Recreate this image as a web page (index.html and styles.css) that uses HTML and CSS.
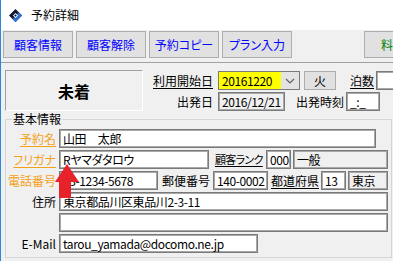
FILE: index.html
```html
<!DOCTYPE html>
<html lang="ja">
<head>
<meta charset="utf-8">
<title>予約詳細</title>
<link rel="stylesheet" href="styles.css">
</head>
<body>
<div class="win">
  <div class="titlebar">
    <svg class="appicon" viewBox="0 0 13 13" width="13" height="13">
      <polygon points="6.5,0 13,6.5 6.5,13 0,6.5" fill="#0d1530"/>
      <polygon points="9.5,3.5 13,6.5 6.5,13 3.5,10" fill="#2f6fd6"/>
      <polygon points="4,6.5 6.5,4 9,6.5 6.5,9" fill="#ffffff"/>
      <polygon points="5.2,6.5 6.5,5.2 7.8,6.5 6.5,7.8" fill="#0d1530"/>
    </svg>
    <span class="title">予約詳細</span>
  </div>
  <div class="toolbar">
    <button class="tb">顧客情報</button>
    <button class="tb">顧客解除</button>
    <button class="tb">予約コピー</button>
    <button class="tb">プラン入力</button>
    <button class="tb tb-green">料</button>
  </div>
  <div class="main">
    <div class="top">
      <div class="status">未着</div>
      <div class="dates">
        <div class="drow">
          <span class="dlbl u">利用開始日</span>
          <div class="combo">
            <span class="combo-text">20161220</span>
            <span class="combo-btn"><svg viewBox="0 0 10 6" width="10" height="6"><polyline points="1,1 5,5 9,1" fill="none" stroke="#606060" stroke-width="1.2"/></svg></span>
          </div>
          <button class="daybtn">火</button>
          <span class="lbl u nights-l">泊数</span>
          <span class="box nights"></span>
        </div>
        <div class="drow">
          <span class="dlbl">出発日</span>
          <span class="box dis depdate">2016/12/21</span>
          <span class="lbl deptime-l">出発時刻</span>
          <span class="box deptime">_:_</span>
        </div>
      </div>
    </div>
    <fieldset class="group">
      <legend>基本情報</legend>
      <div class="frow">
        <span class="flbl orange u">予約名</span>
        <span class="box w-name">山田　太郎</span>
      </div>
      <div class="frow">
        <span class="flbl orange u">フリガナ</span>
        <span class="box w-kana">Rヤマダタロウ</span>
        <span class="lbl u rank-l">顧客ランク</span>
        <span class="box w-rank">000</span>
        <span class="box dis w-rankname">一般</span>
      </div>
      <div class="frow">
        <span class="flbl orange">電話番号</span>
        <span class="box w-tel">03-1234-5678</span>
        <span class="lbl zip-l">郵便番号</span>
        <span class="box w-zip">140-0002</span>
        <span class="lbl u pref-l">都道府県</span>
        <span class="box w-pref">13</span>
        <span class="box dis w-prefname">東京</span>
      </div>
      <div class="frow">
        <span class="flbl">住所</span>
        <span class="box w-addr">東京都品川区東品川2-3-11</span>
      </div>
      <div class="frow">
        <span class="flbl"></span>
        <span class="box w-addr"></span>
      </div>
      <div class="frow">
        <span class="flbl">E-Mail</span>
        <span class="box w-mail">tarou_yamada@docomo.ne.jp</span>
      </div>
    </fieldset>
  </div>
  <svg class="arrow" viewBox="0 0 26 35" width="26" height="35">
    <polygon points="13,0 25,18 17,18 17,34 5,34 5,18 1,18" fill="#e8222b"/>
  </svg>
</div>
</body>
</html>
```

FILE: styles.css
```css
* { box-sizing: border-box; }

body {
  margin: 0;
  width: 393px;
  height: 261px;
  overflow: hidden;
  font-family: "Noto Sans CJK JP", "Noto Sans", sans-serif;
  font-size: 12px;
  font-feature-settings: "palt";
  color: #000;
  background: #f0f0f0;
}

.win {
  position: relative;
  height: 261px;
  border-left: 1px solid #2b88d8;
  background: #f0f0f0;
}

.titlebar {
  height: 30px;
  background: #fff;
  display: flex;
  align-items: center;
  padding-left: 8px;
  gap: 9px;
}

.appicon { flex: none; }

.title {
  font-size: 12px;
  line-height: 14px;
  font-feature-settings: normal;
}

.toolbar {
  height: 33px;
  display: flex;
  gap: 3px;
  padding: 1px 0 0 2px;
  border-bottom: 1px solid #a0a0a0;
  overflow: hidden;
}

.tb {
  flex: none;
  width: 70px;
  height: 27px;
  padding: 0;
  background: #e1e1e1;
  border: 1px solid #adadad;
  color: #0000ff;
  font: inherit;
  line-height: 25px;
  white-space: nowrap;
}

.tb-green {
  color: #008000;
  margin-left: 69px;
  text-align: left;
  padding-left: 16px;
}

.main {
  padding: 7px 0 0 4px;
}

.top {
  display: flex;
}

.status {
  flex: none;
  width: 138px;
  height: 41px;
  border: 1px solid;
  border-color: #a0a0a0 #ffffff #ffffff #a0a0a0;
  display: flex;
  align-items: center;
  justify-content: center;
  font-size: 16px;
  font-weight: bold;
  padding-top: 1px;
}

.dates {
  display: flex;
  flex-direction: column;
  gap: 2px;
  margin-left: 2px;
  padding-top: 1px;
}

.drow {
  display: flex;
  align-items: center;
  height: 19px;
}

.dlbl {
  flex: none;
  width: 70px;
  padding-right: 2px;
  text-align: right;
  line-height: 17px;
  font-feature-settings: normal;
}

.lbl {
  flex: none;
  line-height: 17px;
  white-space: nowrap;
}

.u { text-decoration: underline; text-underline-offset: 2px; }

.combo {
  flex: none;
  display: flex;
  width: 82px;
  height: 19px;
  margin-left: 3px;
  border: 1px solid #7a7a7a;
  background: #ffff00;
}

.combo-text {
  flex: 1;
  padding-left: 3px;
  line-height: 17px;
  letter-spacing: -0.4px;
}

.combo-btn {
  flex: none;
  width: 18px;
  background: #e3e3e3;
  display: flex;
  align-items: center;
  justify-content: center;
}

.daybtn {
  flex: none;
  width: 32px;
  height: 19px;
  margin-left: 4px;
  padding: 0;
  background: #e1e1e1;
  border: 1px solid #adadad;
  font: inherit;
  line-height: 17px;
  color: #000;
}

.nights-l { margin-left: 14px; width: 24px; }

.box {
  flex: none;
  display: block;
  height: 19px;
  border: 1px solid #7a7a7a;
  box-shadow: inset 0 0 0 1px #a8a8a8;
  background: #fff;
  padding-left: 3px;
  line-height: 17px;
  letter-spacing: -0.4px;
  white-space: nowrap;
  overflow: hidden;
}

.dis { background: #f0f0f0; }

.nights { width: 30px; margin-left: 2px; }
.depdate { width: 67px; margin-left: 3px; }
.deptime-l { margin-left: 11px; width: 48px; }
.deptime { width: 34px; margin-left: 2px; }

.group {
  margin: 1px 0 0 0;
  padding: 3px 0 0 0;
  width: 387px;
  height: 146px;
  border: 1px solid #d5d5d5;
  min-width: 0;
}

.group legend {
  margin-left: 6px;
  padding: 0 1px;
  font-size: 12px;
  line-height: 14px;
}

.frow {
  display: flex;
  align-items: center;
  height: 19px;
  margin-bottom: 2px;
}

.flbl {
  flex: none;
  width: 50px;
  margin-right: 3px;
  text-align: right;
  line-height: 17px;
  white-space: nowrap;
}

.orange { color: #f5a01a; }

.w-name { width: 317px; }
.w-kana { width: 150px; }
.rank-l { margin-left: 6px; width: 48px; font-size: 11px; letter-spacing: -0.7px; }
.w-rank { width: 25px; margin-left: 3px; }
.w-rankname { width: 95px; margin-left: 2px; }
.w-tel { width: 99px; }
.zip-l { margin-left: 4px; width: 49px; }
.w-zip { width: 55px; margin-left: 2px; }
.pref-l { margin-left: 3px; width: 48px; }
.w-pref { width: 25px; margin-left: 2px; }
.w-prefname { width: 40px; margin-left: 2px; }
.w-addr { width: 329px; }
.w-mail { width: 199px; }

.arrow {
  position: absolute;
  left: 53px;
  top: 164px;
}
```
